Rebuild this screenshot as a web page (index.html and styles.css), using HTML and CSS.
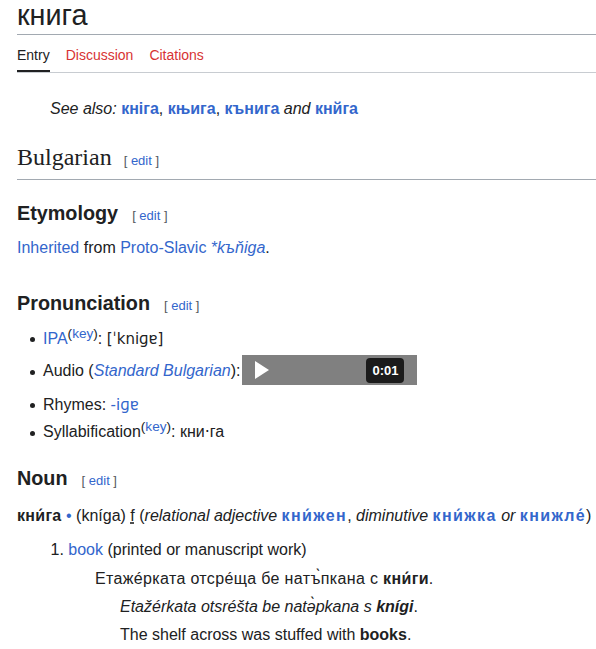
FILE: index.html
```html
<!DOCTYPE html>
<html lang="en">
<head>
<meta charset="utf-8">
<title>книга</title>
<link rel="stylesheet" href="styles.css">
</head>
<body>
<div class="page">
  <h1 class="title">книга</h1>
  <nav class="tabs">
    <a class="tab active" href="#">Entry</a>
    <a class="tab new" href="#">Discussion</a>
    <a class="tab new" href="#">Citations</a>
  </nav>

  <p class="seealso"><i>See also:</i> <a class="b" href="#">кніга</a>, <a class="b" href="#">књига</a>, <a class="b" href="#">кънига</a> <i>and</i> <a class="b" href="#">кнйга</a></p>

  <h2 class="lang">Bulgarian<span class="editsection">[ <a href="#">edit</a> ]</span></h2>

  <h3 class="sec sec-ety">Etymology<span class="editsection">[ <a href="#">edit</a> ]</span></h3>
  <p class="ety"><a href="#">Inherited</a> from <a href="#">Proto-Slavic</a> <a href="#"><i>*kъňiga</i></a>.</p>

  <h3 class="sec sec-pron">Pronunciation<span class="editsection">[ <a href="#">edit</a> ]</span></h3>
  <ul class="pron">
    <li><a href="#">IPA</a><sup class="key">(<a href="#">key</a>)</sup>: <span class="ipa">[ˈkniɡɐ]</span></li>
    <li class="audio">Audio (<a href="#"><i>Standard Bulgarian</i></a>):<span class="player"><span class="controls"><svg class="play" width="14" height="18" viewBox="0 0 14 18"><polygon points="0,0 14,9 0,18" fill="#fff"/></svg><span class="time">0:01</span></span></span></li>
    <li>Rhymes: <a href="#" class="ipa">-iɡɐ</a></li>
    <li>Syllabification<sup class="key">(<a href="#">key</a>)</sup>: кни‧га</li>
  </ul>

  <h3 class="sec sec-noun">Noun<span class="editsection">[ <a href="#">edit</a> ]</span></h3>
  <p class="headword"><b class="hw">кни́га</b> <a href="#" class="dot">•</a> (kníga) <abbr class="gender" title="feminine gender">f</abbr> (<i>relational adjective</i> <a class="b acc" href="#">кни́жен</a>, <i>diminutive</i> <a class="b acc" href="#">кни́жка</a> <i>or</i> <a class="b acc" href="#">книжле́</a>)</p>

  <ol class="senses">
    <li><a href="#">book</a> (printed or manuscript work)
      <div class="example">
        <div class="ex-text">Етажéрката отсрéща бе натъ̀пкана с <b>кни́ги</b>.</div>
        <div class="ex-sub">
          <div class="ex-line"><i>Etažérkata otsréšta be natə̀pkana s <b>knígi</b></i>.</div>
          <div class="ex-line">The shelf across was stuffed with <b>books</b>.</div>
        </div>
      </div>
    </li>
  </ol>
</div>
</body>
</html>
```

FILE: styles.css
```css
html, body {
  margin: 0;
  padding: 0;
  background: #ffffff;
}

body {
  font-family: "Liberation Sans", Arial, "DejaVu Sans", sans-serif;
  font-size: 16px;
  color: #202122;
}

a {
  color: #3366cc;
  text-decoration: none;
}

.page {
  padding-left: 17px;
}

.title {
  margin: 0;
  font-size: 28.8px;
  font-weight: normal;
  line-height: 30px;
  padding-bottom: 4px;
  border-bottom: 1px solid #a2a9b1;
}

.tabs {
  display: flex;
  gap: 16px;
  border-bottom: 1px solid #c8ccd1;
  font-size: 14px;
}

.tab {
  padding: 10px 0 5px;
  line-height: 20px;
  border-bottom: 2px solid transparent;
  color: #d73333;
}

.tab.active {
  color: #202122;
  border-bottom-color: #202122;
}

.seealso {
  margin: 25px 0 0 33px;
  line-height: 22px;
}

.b {
  font-weight: bold;
}

.lang {
  margin: 22px 0 0;
  font-family: "Liberation Serif", "Times New Roman", serif;
  font-size: 24px;
  font-weight: normal;
  line-height: 30px;
  padding-bottom: 7px;
  border-bottom: 1px solid #a2a9b1;
}

.editsection {
  font-family: "Liberation Sans", Arial, sans-serif;
  font-size: 13px;
  font-weight: normal;
  line-height: 1;
  color: #54595d;
  margin-left: 12px;
}

.sec {
  margin: 0;
  font-size: 19.8px;
  font-weight: bold;
  line-height: 26px;
}

.sec .editsection {
  margin-left: 14px;
}

.sec-ety {
  margin-top: 20px;
}

.ety {
  margin: 10.5px 0 0;
  line-height: 22px;
}

.sec-pron {
  margin-top: 31.5px;
}

.pron {
  margin: 9.8px 0 0;
  padding-left: 26px;
  list-style: none;
}

.pron li {
  position: relative;
  line-height: 26px;
  margin-bottom: 1.7px;
}

.pron li::before {
  content: "";
  position: absolute;
  left: -13px;
  top: 11.5px;
  width: 5px;
  height: 5px;
  border-radius: 50%;
  background: #202122;
}

.pron li.audio::before {
  top: 17px;
}

.key {
  font-size: 13.6px;
  line-height: 0;
  vertical-align: 6px;
}

.ipa {
  font-family: "DejaVu Sans", sans-serif;
  font-size: 15px;
}

.player {
  display: inline-block;
  overflow: hidden;
  width: 175px;
  height: 30px;
  margin: 1.5px 0 5px 2px;
  vertical-align: -13.3px;
  background: #808080;
}

.controls {
  display: flex;
  align-items: center;
  justify-content: space-between;
  height: 30px;
  padding: 1px 13px 0 13px;
  box-sizing: border-box;
}

.play {
  display: block;
}

.time {
  display: block;
  width: 38px;
  height: 25px;
  line-height: 25px;
  border-radius: 4px;
  background: #1b1b1b;
  color: #ffffff;
  font-size: 13px;
  font-weight: bold;
  text-align: center;
}

.sec-noun {
  margin-top: 19.5px;
}

.headword {
  margin: 14px 0 0;
  line-height: 22px;
  white-space: nowrap;
}

.hw {
  letter-spacing: 0.3px;
}

.acc {
  letter-spacing: 1.4px;
}

.gender {
  text-decoration: underline dotted;
  text-underline-offset: 2px;
}

.senses {
  margin: 12.2px 0 0;
  padding-left: 51.3px;
}

.senses li {
  line-height: 22px;
}

.example {
  margin-top: 4px;
  padding-left: 26.7px;
  line-height: 28px;
}

.ex-text {
  letter-spacing: 0.35px;
}

.ex-sub {
  padding-left: 25px;
}
```
